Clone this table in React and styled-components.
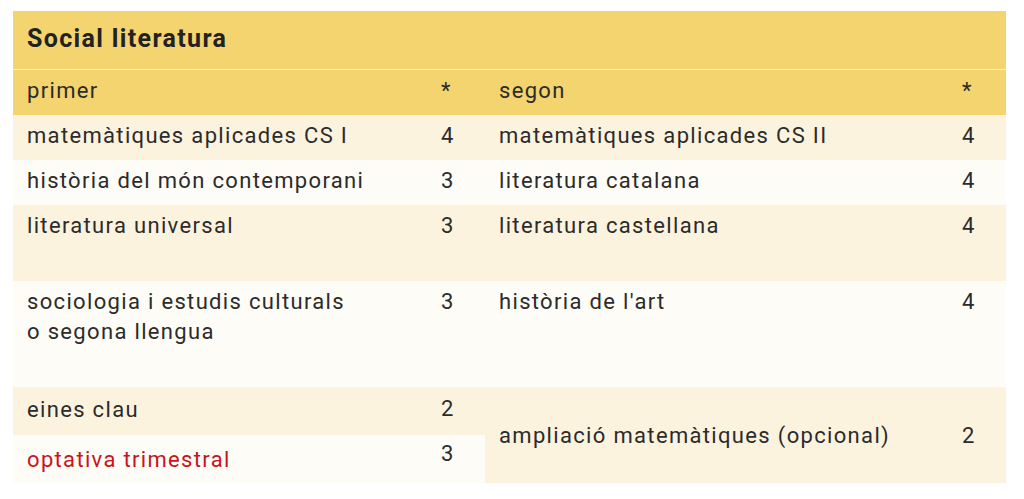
import { createGlobalStyle, styled } from 'styled-components'

const GlobalStyle = createGlobalStyle`
  body {
    margin: 0;
    background: #fff;
    font-family: Roboto, 'Liberation Sans', sans-serif;
    color: #2b2b2b;
  }
`

const tones = {
  head: '#f3d46e',
  cream: '#fcf3df',
  light: '#fefcf6',
}

const Page = styled.div`
  padding: 11px 18px 0 13px;
`
const Card = styled.div`
  width: 993px;
`
const TitleBar = styled.h2`
  margin: 0;
  height: 59px;
  box-sizing: border-box;
  padding: 13px 14px 0;
  background: ${tones.head};
  border-bottom: 1px solid #fbf1cf;
  font-size: 25px;
  line-height: 30px;
  font-weight: 700;
  letter-spacing: 1.35px;
  color: #222;
`
const Grid = styled.div`
  display: grid;
  grid-template-columns: 414px 58px 463px 58px;
  grid-template-rows: 45px 45px 45px 76px 106px 48px 48px;
`
const Cell = styled.div`
  box-sizing: border-box;
  padding: ${(p) => p.$pt ?? 6}px 14px 0;
  background: ${(p) => tones[p.$tone]};
  font-size: 22px;
  line-height: 30px;
  letter-spacing: 1.33px;
  white-space: nowrap;
  color: ${(p) => (p.$red ? '#c8141c' : '#2b2b2b')};
`
const SpanCell = styled(Cell)`
  grid-row: span 2;
  display: flex;
  align-items: center;
  padding-top: 2px;
`

const rows = [
  { tone: 'cream', a: ['matemàtiques aplicades CS I', 4], b: ['matemàtiques aplicades CS II', 4] },
  { tone: 'light', a: ['història del món contemporani', 3], b: ['literatura catalana', 4] },
  { tone: 'cream', a: ['literatura universal', 3], b: ['literatura castellana', 4] },
  {
    tone: 'light',
    a: [
      <>
        sociologia i estudis culturals
        <br />o segona llengua
      </>,
      3,
    ],
    b: ["història de l'art", 4],
  },
]

export default function App() {
  return (
    <Page>
      <GlobalStyle />
      <Card>
        <TitleBar>Social literatura</TitleBar>
        <Grid>
          <Cell $tone="head">primer</Cell>
          <Cell $tone="head">*</Cell>
          <Cell $tone="head">segon</Cell>
          <Cell $tone="head">*</Cell>
          {rows.map((r, i) => (
            <>
              <Cell key={`a${i}`} $tone={r.tone}>{r.a[0]}</Cell>
              <Cell key={`an${i}`} $tone={r.tone}>{r.a[1]}</Cell>
              <Cell key={`b${i}`} $tone={r.tone}>{r.b[0]}</Cell>
              <Cell key={`bn${i}`} $tone={r.tone}>{r.b[1]}</Cell>
            </>
          ))}
          <Cell $tone="cream" $pt={8}>eines clau</Cell>
          <Cell $tone="cream" $pt={7}>2</Cell>
          <SpanCell $tone="cream">ampliació matemàtiques (opcional)</SpanCell>
          <SpanCell $tone="cream">2</SpanCell>
          <Cell $tone="light" $pt={10} $red>optativa trimestral</Cell>
          <Cell $tone="light" $pt={4}>3</Cell>
        </Grid>
      </Card>
    </Page>
  )
}
